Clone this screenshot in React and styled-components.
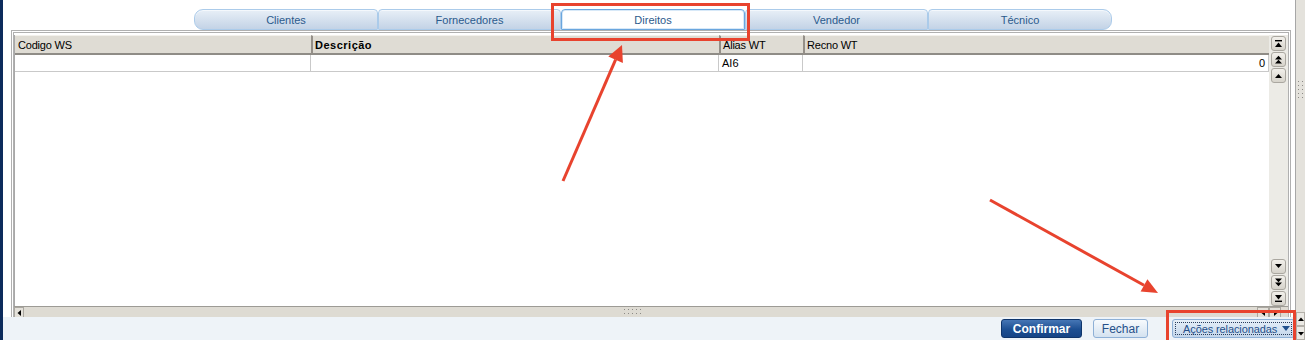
import React from "react";
import styled, { createGlobalStyle } from "styled-components";

const GlobalStyle = createGlobalStyle`
  html, body { margin: 0; padding: 0; background: #fff; }
  body { font-family: "Liberation Sans", Arial, sans-serif; }
`;

const Page = styled.div`
  position: relative;
  display: flex;
  width: 1305px;
  height: 340px;
  overflow: hidden;
  background: #fff;
`;

const NavyStrip = styled.div`
  width: 3px;
  flex-shrink: 0;
  background: #0c2b5c;
`;

const Main = styled.div`
  display: flex;
  flex-direction: column;
  width: 1292px;
  flex-shrink: 0;
`;

const TabRow = styled.div`
  display: flex;
  align-items: flex-end;
  height: 30px;
  padding-left: 191px;
  box-sizing: border-box;
`;

const Tab = styled.div`
  box-sizing: border-box;
  width: ${({ $w }) => $w}px;
  height: 21px;
  display: flex;
  align-items: center;
  justify-content: center;
  font-size: 11px;
  color: #2b5a8c;
  border: 1px solid ${({ $active }) => ($active ? "#6aa6de" : "#abcbea")};
  box-shadow: ${({ $active }) => ($active ? "inset 0 0 0 1px #d8e9f8" : "inset 0 1px 0 #f4f8fc")};
  background: ${({ $active }) => ($active ? "#fff" : "linear-gradient(#e8eff7, #c3d3e6)")};
  border-radius: ${({ $first, $last }) =>
    $first ? "9px 4px 0 9px" : $last ? "4px 9px 9px 0" : "4px 4px 0 0"};
`;

const Body = styled.div`
  flex: 1;
  display: flex;
  min-height: 0;
  padding: 0 4px 0 8px;
`;

const Panel = styled.div`
  flex: 1;
  display: flex;
  flex-direction: column;
  border: 3px double #b0b0b0;
  border-bottom: none;
  box-sizing: border-box;
`;

const GridArea = styled.div`
  flex: 1;
  display: flex;
  min-height: 0;
  padding-top: 2px;
`;

const Grid = styled.div`
  flex: 1;
  display: flex;
  flex-direction: column;
  border-left: 1px solid #a8a8a8;
  background: #fff;
`;

const GridRow = styled.div`
  display: grid;
  grid-template-columns: 296px 408px 84px 1fr;
`;

const HeaderCell = styled.div`
  box-sizing: border-box;
  height: 20px;
  display: flex;
  align-items: center;
  padding-left: ${({ $sep }) => ($sep ? "2px" : "3px")};
  font-size: 11px;
  font-weight: ${({ $bold }) => ($bold ? 700 : 400)};
  letter-spacing: ${({ $bold }) => ($bold ? "0.5px" : "-0.2px")};
  color: #000;
  background: #dfdcd4;
  border-top: 1px solid #f3f1ec;
  border-bottom: 2px solid #8f8c86;
  border-left: ${({ $sep }) => ($sep ? "2px solid #948f88" : "none")};
`;

const DataCell = styled.div`
  box-sizing: border-box;
  height: 17px;
  display: flex;
  align-items: center;
  justify-content: ${({ $right }) => ($right ? "flex-end" : "flex-start")};
  padding: 0 3px;
  font-size: 11px;
  color: #000;
  border-right: 1px solid #c9c9c9;
  border-bottom: 1px solid #c9c9c9;
`;

const VScroll = styled.div`
  width: 19px;
  box-sizing: border-box;
  display: flex;
  flex-direction: column;
  justify-content: space-between;
  padding: 1px 0 0 2px;
  background: #ecebe6;
`;

const ScrollGroup = styled.div`
  display: flex;
  flex-direction: column;
  gap: 1px;
`;

const ScrollBtn = styled.div`
  width: 15px;
  height: 15px;
  box-sizing: border-box;
  display: flex;
  align-items: center;
  justify-content: center;
  border: 1px solid #aaa7a0;
  border-radius: 3px;
  background: linear-gradient(#f2f0eb, #d6d3cb);
`;

const HScroll = styled.div`
  height: 11px;
  box-sizing: border-box;
  display: flex;
  align-items: stretch;
  border-top: 1px solid #9d9b95;
  background: #dedbd3;
`;

const HBtn = styled.div`
  width: ${({ $w }) => $w || 10}px;
  box-sizing: border-box;
  display: flex;
  align-items: center;
  justify-content: center;
  border: 1px solid #aaa7a0;
  border-bottom: none;
  background: #e4e1da;
`;

const HTrack = styled.div`
  flex: 1;
  display: flex;
  align-items: center;
  justify-content: center;
  padding-right: 16px;
`;

const HRight = styled.div`
  display: flex;
  margin-right: 7px;
`;

const Footer = styled.div`
  height: 23px;
  display: flex;
  align-items: center;
  justify-content: flex-end;
  background: #eef3f8;
`;

const FooterButton = styled.div`
  box-sizing: border-box;
  width: ${({ $w }) => $w}px;
  height: 19px;
  margin-left: ${({ $ml }) => $ml || 0}px;
  display: flex;
  align-items: center;
  justify-content: center;
  font-size: 12px;
  white-space: nowrap;
  border-radius: 3px;
  ${({ $primary }) =>
    $primary
      ? `
    color: #fff;
    font-weight: 700;
    border: 1px solid #0f356b;
    background: linear-gradient(#4676b5, #1d4f92 55%, #164486);
  `
      : `
    color: #26508a;
    border: 1px solid #8eb0d6;
    background: linear-gradient(#f7fafd, #d4e2f0);
  `}
`;

const DropButton = styled(FooterButton)`
  position: relative;
  justify-content: flex-start;
  padding-left: 10px;
  font-size: 11px;
  letter-spacing: -0.1px;
  background: linear-gradient(#e6eff8, #c3d6eb);
  &::before {
    content: "";
    position: absolute;
    inset: 2px;
    border: 1px dotted #2a3e5c;
  }
`;

const DropArrow = styled.span`
  position: absolute;
  right: 4px;
  top: 6px;
  width: 0;
  height: 0;
  border-left: 4px solid transparent;
  border-right: 4px solid transparent;
  border-top: 5px solid #1f4f8c;
`;

const SideStrip = styled.div`
  width: 10px;
  box-sizing: border-box;
  display: flex;
  flex-direction: column;
  align-items: center;
  border-left: 1px solid #a7a7a7;
  background: #e4e2dc;
`;

const SideGrip = styled.div`
  margin-top: 80px;
  flex: 1;
`;

const SideBtn = styled.div`
  width: 9px;
  height: 14px;
  box-sizing: border-box;
  display: flex;
  align-items: center;
  justify-content: center;
  border: 1px solid #b3b0a9;
  background: #ebe9e4;
`;

const Overlay = styled.svg`
  position: absolute;
  left: 0;
  top: 0;
  pointer-events: none;
`;

const Arrow = ({ kind, down }) => (
  <svg width="9" height="9" viewBox="0 0 9 9">
    <g transform={down ? "translate(0 9) scale(1 -1)" : undefined} fill="#000">
      {kind === "end" && (
        <>
          <rect x="1" y="1" width="7" height="1.4" />
          <path d="M1 8 L4.5 3.6 L8 8 Z" />
        </>
      )}
      {kind === "double" && <path d="M1 4.6 L4.5 0.8 L8 4.6 Z M1 8.6 L4.5 4.8 L8 8.6 Z" />}
      {kind === "single" && <path d="M1 7 L4.5 3 L8 7 Z" />}
    </g>
  </svg>
);

const SmallTri = ({ dir }) => {
  const d = {
    left: "M5 1 L1.5 4 L5 7 Z",
    right: "M2 1 L5.5 4 L2 7 Z",
    up: "M1 5 L4 1.5 L7 5 Z",
    down: "M1 2 L4 5.5 L7 2 Z",
  }[dir];
  return (
    <svg width="7" height="7" viewBox="0 0 7 7">
      <path d={d} fill="#000" />
    </svg>
  );
};

const Dots = ({ cols, rows }) => (
  <svg width={cols * 4} height={rows * 4}>
    {Array.from({ length: rows }).map((_, r) =>
      Array.from({ length: cols }).map((_, c) => (
        <rect key={`${r}-${c}`} x={c * 4 + 1} y={r * 4 + 1} width="1" height="1" fill="#8c8a86" />
      ))
    )}
  </svg>
);

const tabs = [
  { label: "Clientes", w: 184 },
  { label: "Fornecedores", w: 183 },
  { label: "Direitos", w: 184, active: true },
  { label: "Vendedor", w: 183 },
  { label: "Técnico", w: 184 },
];

const RED = "#e8432e";

const App = () => (
  <>
    <GlobalStyle />
    <Page>
      <NavyStrip />
      <Main>
        <TabRow>
          {tabs.map((t, i) => (
            <Tab key={t.label} $w={t.w} $active={t.active} $first={i === 0} $last={i === tabs.length - 1}>
              {t.label}
            </Tab>
          ))}
        </TabRow>
        <Body>
          <Panel>
            <GridArea>
              <Grid>
                <GridRow>
                  <HeaderCell>Codigo WS</HeaderCell>
                  <HeaderCell $sep $bold>Descrição</HeaderCell>
                  <HeaderCell $sep>Alias WT</HeaderCell>
                  <HeaderCell $sep>Recno WT</HeaderCell>
                </GridRow>
                <GridRow>
                  <DataCell />
                  <DataCell />
                  <DataCell>AI6</DataCell>
                  <DataCell $right>0</DataCell>
                </GridRow>
              </Grid>
              <VScroll>
                <ScrollGroup>
                  <ScrollBtn><Arrow kind="end" /></ScrollBtn>
                  <ScrollBtn><Arrow kind="double" /></ScrollBtn>
                  <ScrollBtn><Arrow kind="single" /></ScrollBtn>
                </ScrollGroup>
                <ScrollGroup>
                  <ScrollBtn><Arrow kind="single" down /></ScrollBtn>
                  <ScrollBtn><Arrow kind="double" down /></ScrollBtn>
                  <ScrollBtn><Arrow kind="end" down /></ScrollBtn>
                </ScrollGroup>
              </VScroll>
            </GridArea>
            <HScroll>
              <HBtn><SmallTri dir="left" /></HBtn>
              <HTrack><Dots cols={5} rows={2} /></HTrack>
              <HRight>
                <HBtn $w={12}><SmallTri dir="left" /></HBtn>
                <HBtn $w={12}><SmallTri dir="right" /></HBtn>
              </HRight>
            </HScroll>
          </Panel>
        </Body>
        <Footer>
          <FooterButton $primary $w={81}>Confirmar</FooterButton>
          <FooterButton $w={55} $ml={11}>Fechar</FooterButton>
          <DropButton $w={123} $ml={24}>
            Ações relacionadas
            <DropArrow />
          </DropButton>
        </Footer>
      </Main>
      <SideStrip>
        <SideGrip>
          <Dots cols={2} rows={5} />
        </SideGrip>
        <SideBtn><SmallTri dir="up" /></SideBtn>
        <SideBtn><SmallTri dir="down" /></SideBtn>
      </SideStrip>

      <Overlay width="1305" height="340" viewBox="0 0 1305 340">
        <rect x="552.5" y="4.5" width="196" height="35" fill="none" stroke={RED} strokeWidth="3" />
        <rect x="1167.5" y="311.5" width="127" height="40" fill="none" stroke={RED} strokeWidth="3" />
        <line x1="563" y1="181" x2="615.6" y2="59.7" stroke={RED} strokeWidth="3" />
        <polygon points="622,45 622.9,62.9 608.3,56.5" fill={RED} />
        <line x1="990" y1="200" x2="1144" y2="285.3" stroke={RED} strokeWidth="3" />
        <polygon points="1158,293 1140.6,291.4 1147.4,279.2" fill={RED} />
      </Overlay>
    </Page>
  </>
);

export default App;
